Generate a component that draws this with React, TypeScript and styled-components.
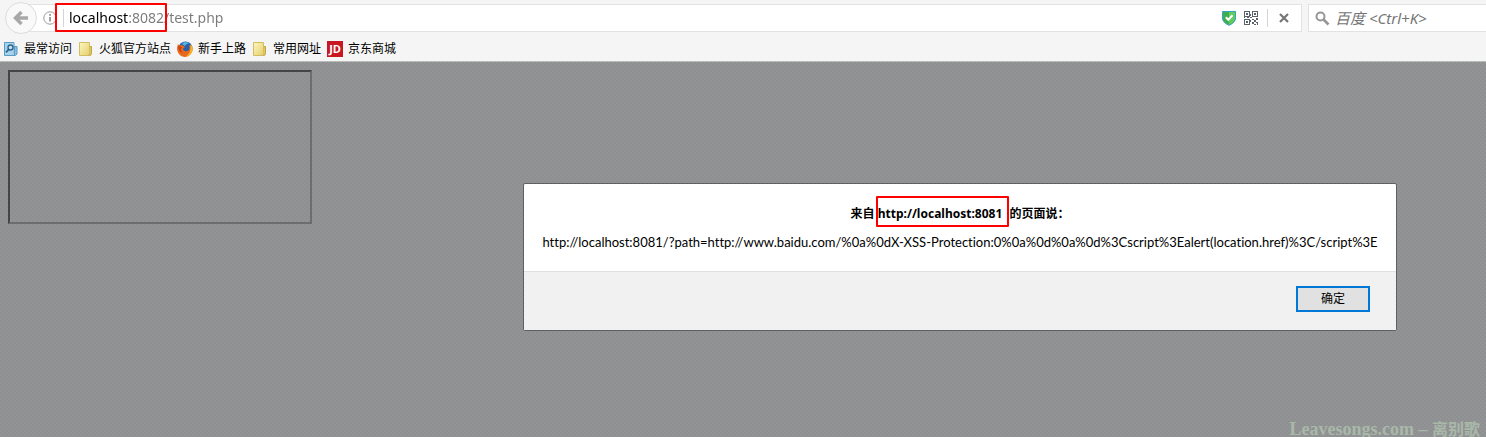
import React from "react";
import styled, { createGlobalStyle } from "styled-components";

const uiFont = `"Noto Sans", "Open Sans", "Noto Sans CJK SC", sans-serif`;

const GlobalStyle = createGlobalStyle`
  * { box-sizing: border-box; }
  body { margin: 0; font-family: ${uiFont}; font-size: 12px; color: #000; }
`;

const Browser = styled.div`
  display: flex;
  flex-direction: column;
  min-height: 100vh;
  overflow: hidden;
  background: #f5f5f5;
`;

const Toolbar = styled.header`
  display: flex;
  align-items: center;
  height: 36px;
  padding-left: 5px;
`;

const BackButton = styled.button`
  display: flex;
  align-items: center;
  justify-content: center;
  flex: none;
  width: 32px;
  height: 32px;
  padding: 0;
  border: 1px solid #dcdcdc;
  border-radius: 50%;
  background: #f9f9f9;
  z-index: 1;
`;

const AddressBar = styled.div`
  position: relative;
  display: flex;
  align-items: center;
  flex: 1;
  min-width: 0;
  height: 28px;
  margin-left: -8px;
  padding: 0 11px 0 13px;
  border: 1px solid #e2e2e2;
  background: #fff;
`;

const Divider = styled.span`
  flex: none;
  width: 1px;
  height: 18px;
  background: #d4d4d4;
`;

const AddressInput = styled.input`
  flex: 1;
  min-width: 0;
  height: 24px;
  margin-left: 5px;
  padding: 0;
  border: 0;
  outline: 0;
  font: 14px/24px "Noto Sans", sans-serif;
  color: transparent;
  background: linear-gradient(to right, #000 0 60px, #7a7a7a 60px);
  background-clip: text;
  -webkit-background-clip: text;
`;

const IconButton = styled.button`
  display: flex;
  align-items: center;
  justify-content: center;
  flex: none;
  width: 22px;
  height: 22px;
  padding: 0;
  border: 0;
  background: none;
`;

const InfoButton = styled(IconButton)`
  width: 14px;
  margin-right: 6px;
`;

const StopButton = styled(IconButton)`
  width: 12px;
  margin-left: 10px;
`;

const PageActions = styled.div`
  display: flex;
  align-items: center;
  margin-right: 5px;
`;

const SearchBar = styled.label`
  display: flex;
  align-items: center;
  gap: 5px;
  flex: none;
  width: 178px;
  height: 28px;
  margin-left: 6px;
  padding-left: 6px;
  border: 1px solid #e2e2e2;
  border-right: 0;
  background: #fff;
`;

const SearchInput = styled.input`
  flex: 1;
  min-width: 0;
  padding: 0;
  border: 0;
  outline: 0;
  background: none;
  font: italic 15px/24px "Noto Sans", "Noto Sans CJK SC", sans-serif;
  &::placeholder { color: #757575; opacity: 1; }
`;

const Bookmarks = styled.nav`
  display: flex;
  align-items: center;
  gap: 6px;
  height: 26px;
  padding-left: 3px;
  border-bottom: 1px solid #b9bbbb;
`;

const Bookmark = styled.a`
  display: flex;
  align-items: center;
  gap: 5px;
  font-size: 12px;
  line-height: 18px;
  white-space: nowrap;
  color: #000;
  text-decoration: none;
`;

const Page = styled.main`
  position: relative;
  flex: 1;
  min-height: 375px;
  padding: 8px;
  background-color: #949495;
  background-image:
    conic-gradient(#8d9092 25%, transparent 0 50%, #8d9092 0 75%, transparent 0);
  background-size: 4px 4px;
`;

const EmbeddedFrame = styled.section`
  width: 304px;
  height: 154px;
  border: 2px solid;
  border-color: #454545 #6c6d6e #6c6d6e #454545;
`;

const Dialog = styled.div`
  position: absolute;
  top: 121px;
  right: 89px;
  width: 874px;
  max-width: 100%;
  border: 1px solid #5f6061;
  border-radius: 2px;
  background: #fff;
`;

const DialogBody = styled.div`
  padding: 20px 18px 19px;
  text-align: center;
  white-space: nowrap;
`;

const DialogTitle = styled.h1`
  margin: 0 0 10px;
  font-size: 12px;
  line-height: 19px;
`;

const Origin = styled.span`
  position: relative;
  margin-right: 4px;
`;

const DialogMessage = styled.p`
  margin: 0;
  font: 13px/19px Lato, sans-serif;
  font-variant-ligatures: none;
`;

const DialogFooter = styled.div`
  display: flex;
  justify-content: flex-end;
  height: 59px;
  padding: 14px 26px;
  border-top: 1px solid #e0e0e0;
  background: #f1f1f1;
`;

const ConfirmButton = styled.button`
  width: 74px;
  height: 26px;
  padding: 0;
  border: 2px solid #0078d7;
  background: #e1e1e1;
  font: 12px/20px ${uiFont};
  color: #000;
`;

const Highlight = styled.span<{ $inset: string; $width?: number }>`
  position: absolute;
  inset: ${(p) => p.$inset};
  ${(p) => (p.$width ? `width: ${p.$width}px;` : "")}
  border: 2px solid #f00;
  border-radius: 1px;
  pointer-events: none;
`;

const Watermark = styled.div`
  position: absolute;
  right: 6px;
  bottom: 0;
  font: bold 18px/16px "Liberation Serif", serif;
  color: #a9b8a9;
`;

const SiteName = styled.span`
  font: bold 16px/16px "Noto Sans CJK SC", sans-serif;
`;

const MostVisitedIcon = () => (
  <svg width="16" height="16" viewBox="0 0 16 16" aria-hidden="true">
    <path d="M1.5 1.5h9.500v4h3v7.500l-1.500 1.500h-11z" fill="#8dc0e0" stroke="#5a9ac6" />
    <path d="M2 2h8.500v12H2z" fill="#a9d3ec" />
    <path d="M11.500 5.500v9" stroke="#5b9cc7" />
    <circle cx="7.500" cy="6.500" r="2.500" fill="#c5e3f5" stroke="#2f668f" strokeWidth="1.400" />
    <path d="M5.800 8.400 3 11.300" stroke="#2f668f" strokeWidth="1.800" />
  </svg>
);

const FolderIcon = () => (
  <svg width="16" height="16" viewBox="0 0 16 16" aria-hidden="true">
    <defs>
      <linearGradient id="folder" x1="0" y1="0" x2="1" y2="1">
        <stop offset="0" stopColor="#fdf6bf" />
        <stop offset="1" stopColor="#e5cf6b" />
      </linearGradient>
    </defs>
    <path d="M11 5.500h2.500v7q0 2-2 2H9z" fill="#e0c75f" stroke="#c2a544" />
    <path d="M1.500 1.500h10v11q0 2-2 2h-8z" fill="url(#folder)" stroke="#d3bd62" />
  </svg>
);

const FirefoxIcon = () => (
  <svg width="16" height="16" viewBox="0 0 16 16" aria-hidden="true">
    <circle cx="8.5" cy="7.5" r="7" fill="#2461ad" />
    <path d="M5 3Q8-.5 12 2.5 9 2 8 5z" fill="#56b4e4" />
    <path d="M1 3.2 3 4.6Q4.4 3.6 6 4.4L8 6 6 7.4Q5.8 9.8 8.5 10.2 12 10.6 12.6 7L12 4Q16.4 6.7 15.2 10.6 13 16 8 16 2 15.6.4 10Q-.4 6 1 3.2z" fill="#e8681c" />
    <path d="M13.5 3Q17 7 15 11q-2 4-6 4.4 4-3 4.3-6.4z" fill="#f9b62c" />
    <path d="M1 5.5Q3 5 5 6.3 3 9 5.5 12 1.5 10.5 1 5.5z" fill="#c93f16" />
  </svg>
);

const JdLogo = styled.span`
  width: 16px;
  height: 16px;
  background: #c91623;
  color: #fff;
  font: bold 11px/16px "Open Sans", sans-serif;
  text-align: center;
`;

const BackArrow = () => (
  <svg width="16" height="16" viewBox="0 0 16 16" aria-hidden="true">
    <path d="M8.500 2 2.500 8l6 6M3 8h12" fill="none" stroke="#a8a8a8" strokeWidth="3.400" />
  </svg>
);

const InfoIcon = () => (
  <svg width="14" height="14" viewBox="0 0 14 14" aria-hidden="true">
    <circle cx="7" cy="7" r="6.200" fill="none" stroke="#999" />
    <path d="M7 6v4.500M7 3v1.800" stroke="#888" strokeWidth="1.600" />
  </svg>
);

const ShieldIcon = () => (
  <svg width="16" height="16" viewBox="0 0 16 16" aria-hidden="true">
    <path d="M1.500 1.500h13V8q0 4.500-6.500 7.300Q1.500 12.500 1.500 8z" fill="#3fae52" />
    <path d="M8 2h6v6q0 4-6 6.800z" fill="#62cc5d" />
    <path d="M1.500 1.500h13V8q0 4.500-6.500 7.300Q1.500 12.500 1.500 8z" fill="none" stroke="#35a3bd" />
    <path d="m4.800 7.200 2.500 2.500 4.200-4.400" fill="none" stroke="#fff" strokeWidth="2" />
  </svg>
);

const QrIcon = () => (
  <svg width="14" height="14" viewBox="0 0 14 14" fill="#59616b" aria-hidden="true" shapeRendering="crispEdges">
    <path fillRule="evenodd" d="M0 0h6v6H0zM1 1v4h4V1zM8 0h6v6H8zM9 1v4h4V1zM0 8h6v6H0zM1 9v4h4V9z" />
    <path d="M2 2h2v2H2zM10 2h2v2h-2zM2 10h2v2H2zM8 8h2v1H8zM10 9h2v2h-2zM12 7h2v2h-2zM8 11h2v2H8zM12 11h2v1h-2zM10 13h2v1h-2zM13 12h1v2h-1zM6 6h2v1H6zM0 6h1v1H0zM3 6h2v1H3zM6 9h1v2H6zM6 3h1v2H6z" />
  </svg>
);

const StopIcon = () => (
  <svg width="12" height="12" viewBox="0 0 12 12" aria-hidden="true">
    <path d="m2 2 8 8M10 2l-8 8" stroke="#757575" strokeWidth="2.200" />
  </svg>
);

const SearchIcon = () => (
  <svg width="15" height="15" viewBox="0 0 15 15" aria-hidden="true">
    <circle cx="5.500" cy="5.500" r="4" fill="none" stroke="#969696" strokeWidth="2" />
    <path d="m8.500 8.500 5 5" stroke="#969696" strokeWidth="2.600" />
  </svg>
);

const bookmarks = [
  { label: "最常访问", icon: <MostVisitedIcon /> },
  { label: "火狐官方站点", icon: <FolderIcon /> },
  { label: "新手上路", icon: <FirefoxIcon /> },
  { label: "常用网址", icon: <FolderIcon /> },
  { label: "京东商城", icon: <JdLogo>JD</JdLogo> },
];

export default function App() {
  return (
    <Browser>
      <GlobalStyle />
      <Toolbar>
        <BackButton aria-label="后退"><BackArrow /></BackButton>
        <AddressBar>
          <InfoButton aria-label="网站信息"><InfoIcon /></InfoButton>
          <Divider />
          <AddressInput aria-label="网址" defaultValue="localhost:8082/test.php" />
          <PageActions>
            <IconButton aria-label="安全"><ShieldIcon /></IconButton>
            <IconButton aria-label="二维码"><QrIcon /></IconButton>
          </PageActions>
          <Divider />
          <StopButton aria-label="停止"><StopIcon /></StopButton>
          <Highlight $inset="-2px auto -1px 25px" $width={112} />
        </AddressBar>
        <SearchBar>
          <SearchIcon />
          <SearchInput aria-label="搜索" placeholder="百度 <Ctrl+K>" />
        </SearchBar>
      </Toolbar>
      <Bookmarks>
        {bookmarks.map((b) => (
          <Bookmark key={b.label} href="#">{b.icon}{b.label}</Bookmark>
        ))}
      </Bookmarks>
      <Page>
        <EmbeddedFrame />
        <Dialog role="alertdialog" aria-labelledby="dialog-title">
          <DialogBody>
            <DialogTitle id="dialog-title">
              来自 <Origin>http://localhost:8081<Highlight $inset="-9px -7px -5px -2px" /></Origin> 的页面说：
            </DialogTitle>
            <DialogMessage>
              http://localhost:8081/?path=http://www.baidu.com/%0a%0dX-XSS-Protection:0%0a%0d%0a%0d%3Cscript%3Ealert(location.href)%3C/script%3E
            </DialogMessage>
          </DialogBody>
          <DialogFooter><ConfirmButton>确定</ConfirmButton></DialogFooter>
        </Dialog>
        <Watermark>Leavesongs.com – <SiteName>离别歌</SiteName></Watermark>
      </Page>
    </Browser>
  );
}
